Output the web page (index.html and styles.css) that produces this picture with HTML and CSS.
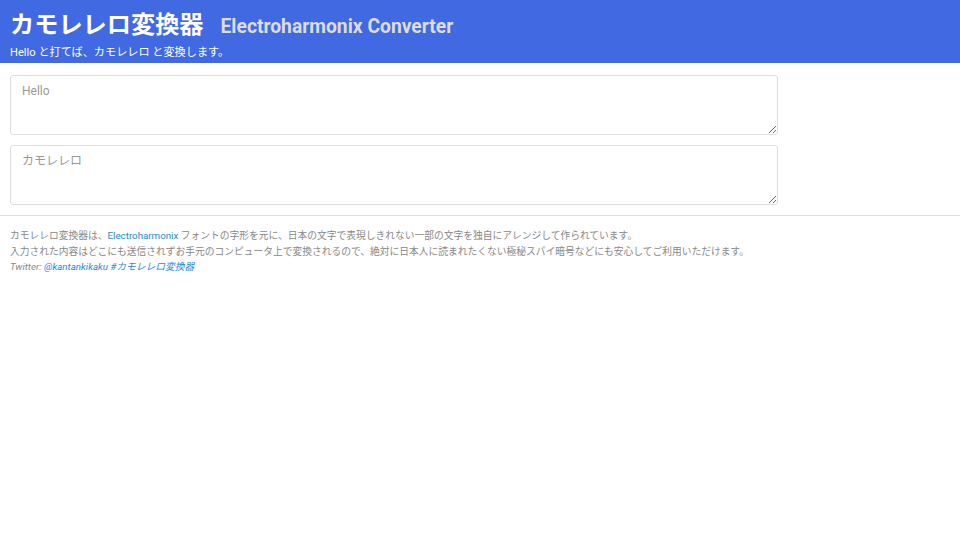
FILE: index.html
```html
<!DOCTYPE html>
<html lang="ja">
<head>
    <meta charset="UTF-8">
    <meta name="viewport" content="width=device-width, initial-scale=1.0">
    <title>カモレレロ変換器</title>
    <link rel="stylesheet" href="styles.css">
</head>
<body>
    <header class="site-header">
        <h1>カモレレロ変換器<small>Electroharmonix Converter</small></h1>
        <p class="lead">Hello と打てば、カモレレロ と変換します。</p>
    </header>
    <main class="converter">
        <textarea class="box" placeholder="Hello"></textarea>
        <textarea class="box" placeholder="カモレレロ"></textarea>
    </main>
    <hr class="divider">
    <footer class="notes">
        <p>カモレレロ変換器は、<a href="#">Electroharmonix</a> フォントの字形を元に、日本の文字で表現しきれない一部の文字を独自にアレンジして作られています。</p>
        <p>入力された内容はどこにも送信されずお手元のコンピュータ上で変換されるので、絶対に日本人に読まれたくない極秘スパイ暗号などにも安心してご利用いただけます。</p>
        <p class="twitter">Twitter: <a href="#">@kantankikaku</a> <a href="#">#カモレレロ変換器</a></p>
    </footer>
</body>
</html>
```

FILE: styles.css
```css
body {
    margin: 0;
    font-family: Roboto, "Noto Sans CJK JP", sans-serif;
    color: #333;
    background: #fff;
}

.site-header {
    background-color: #4169e1;
    color: #fff;
    padding: 8px 10px 4px;
    height: 51px;
}

.site-header h1 {
    margin: 0;
    font-size: 24.2px;
    line-height: 34px;
    font-weight: bold;
}

.site-header small {
    margin-left: 17px;
    font-size: 19.3px;
    color: #dcdcdc;
}

.lead {
    margin: 1px 0 0;
    font-size: 11.15px;
    line-height: 16px;
}

.converter {
    padding: 12px 10px 0;
    width: 768px;
}

.box {
    display: block;
    box-sizing: border-box;
    width: 768px;
    height: 60px;
    margin: 0 0 10px;
    padding: 6px 11px;
    border: 1px solid #ddd;
    border-radius: 3px;
    font-family: inherit;
    font-size: 12px;
    line-height: 18px;
    color: #333;
}

.box::placeholder {
    color: #999;
}

.divider {
    margin: 0;
    border: 0;
    border-top: 1px solid #ddd;
}

.notes {
    padding: 12px 10px;
    font-size: 9.75px;
    line-height: 15.5px;
    color: #888;
}

.notes p {
    margin: 0;
}

.notes a {
    color: #1e88e5;
    text-decoration: none;
}

.twitter {
    font-style: italic;
}
```
